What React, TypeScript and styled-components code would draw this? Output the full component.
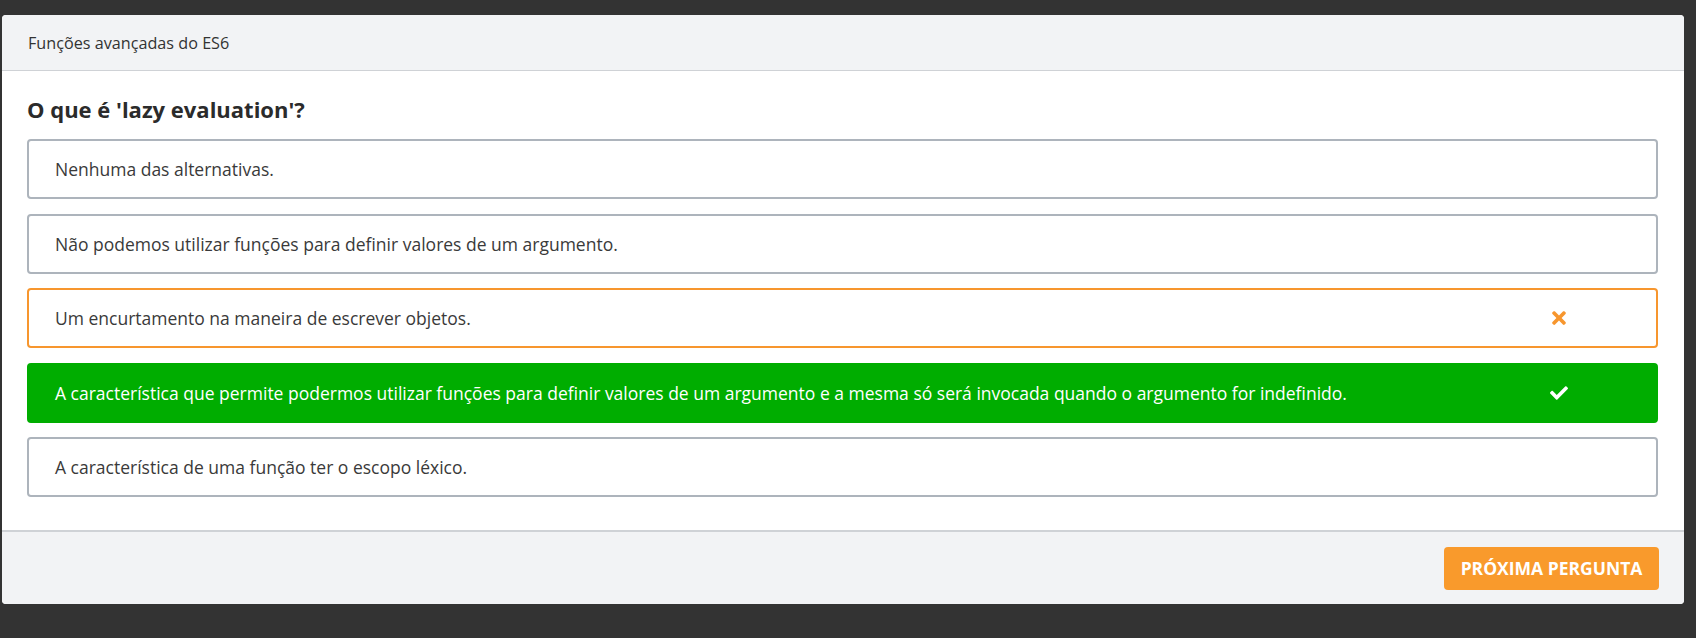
import React from 'react'
import styled, { createGlobalStyle } from 'styled-components'
import { FaTimes, FaCheck } from 'react-icons/fa'

const GlobalStyle = createGlobalStyle`
  html, body {
    margin: 0;
    padding: 0;
    background: #333333;
    font-family: 'Open Sans', 'Noto Sans', sans-serif;
  }
`

const Page = styled.div`
  padding: 15px 12px 33px 2px;
`

const Card = styled.div`
  background: #fff;
  border-radius: 4px;
  overflow: hidden;
  display: flex;
  flex-direction: column;
`

const Header = styled.div`
  background: #f2f3f5;
  border-bottom: 1px solid #cfd2d6;
  height: 55px;
  display: flex;
  align-items: center;
  padding: 0 26px;
  font-size: 16.2px;
  color: #333;
`

const Body = styled.div`
  padding: 23px 26px 33px 25px;
`

const Question = styled.h2`
  margin: 0 0 15px;
  font-size: 22px;
  font-weight: 700;
  line-height: 30px;
  color: #2b2b2b;
`

const Options = styled.div`
  display: flex;
  flex-direction: column;
  gap: 14.5px;
`

type Status = 'idle' | 'wrong' | 'right'

const Option = styled.div<{ $status: Status }>`
  box-sizing: border-box;
  height: 60px;
  display: flex;
  align-items: center;
  justify-content: space-between;
  padding: 0 0 0 26px;
  border-radius: 4px;
  font-size: 17.5px;
  border: 2px solid
    ${(p) => (p.$status === 'wrong' ? '#f7962e' : p.$status === 'right' ? '#00ad00' : '#adb4bc')};
  background: ${(p) => (p.$status === 'right' ? '#00ad00' : '#fff')};
  color: ${(p) => (p.$status === 'right' ? '#fff' : '#3a3a3a')};
`

const IconSlot = styled.span<{ $status: Status }>`
  width: 40px;
  margin-right: 77px;
  display: flex;
  justify-content: center;
  align-items: center;
  color: ${(p) => (p.$status === 'right' ? '#fff' : '#f7962e')};
`

const Footer = styled.div`
  background: #f2f3f5;
  border-top: 2px solid #cfd2d6;
  height: 74px;
  box-sizing: border-box;
  display: flex;
  align-items: center;
  justify-content: flex-end;
  padding: 0 25px 0 0;
`

const NextButton = styled.button`
  background: #f99a2c;
  color: #fff;
  border: none;
  border-radius: 4px;
  height: 43px;
  width: 215px;
  font-family: inherit;
  font-size: 17.5px;
  font-weight: 700;
  text-transform: uppercase;
  cursor: pointer;
`

const options: { text: string; status: Status }[] = [
  { text: 'Nenhuma das alternativas.', status: 'idle' },
  { text: 'Não podemos utilizar funções para definir valores de um argumento.', status: 'idle' },
  { text: 'Um encurtamento na maneira de escrever objetos.', status: 'wrong' },
  {
    text: 'A característica que permite podermos utilizar funções para definir valores de um argumento e a mesma só será invocada quando o argumento for indefinido.',
    status: 'right',
  },
  { text: 'A característica de uma função ter o escopo léxico.', status: 'idle' },
]

export default function App() {
  return (
    <Page>
      <GlobalStyle />
      <Card>
        <Header>Funções avançadas do ES6</Header>
        <Body>
          <Question>O que é 'lazy evaluation'?</Question>
          <Options>
            {options.map((o) => (
              <Option key={o.text} $status={o.status}>
                <span>{o.text}</span>
                {o.status !== 'idle' && (
                  <IconSlot $status={o.status}>
                    {o.status === 'wrong' ? <FaTimes size={20} /> : <FaCheck size={18} />}
                  </IconSlot>
                )}
              </Option>
            ))}
          </Options>
        </Body>
        <Footer>
          <NextButton>Próxima pergunta</NextButton>
        </Footer>
      </Card>
    </Page>
  )
}
